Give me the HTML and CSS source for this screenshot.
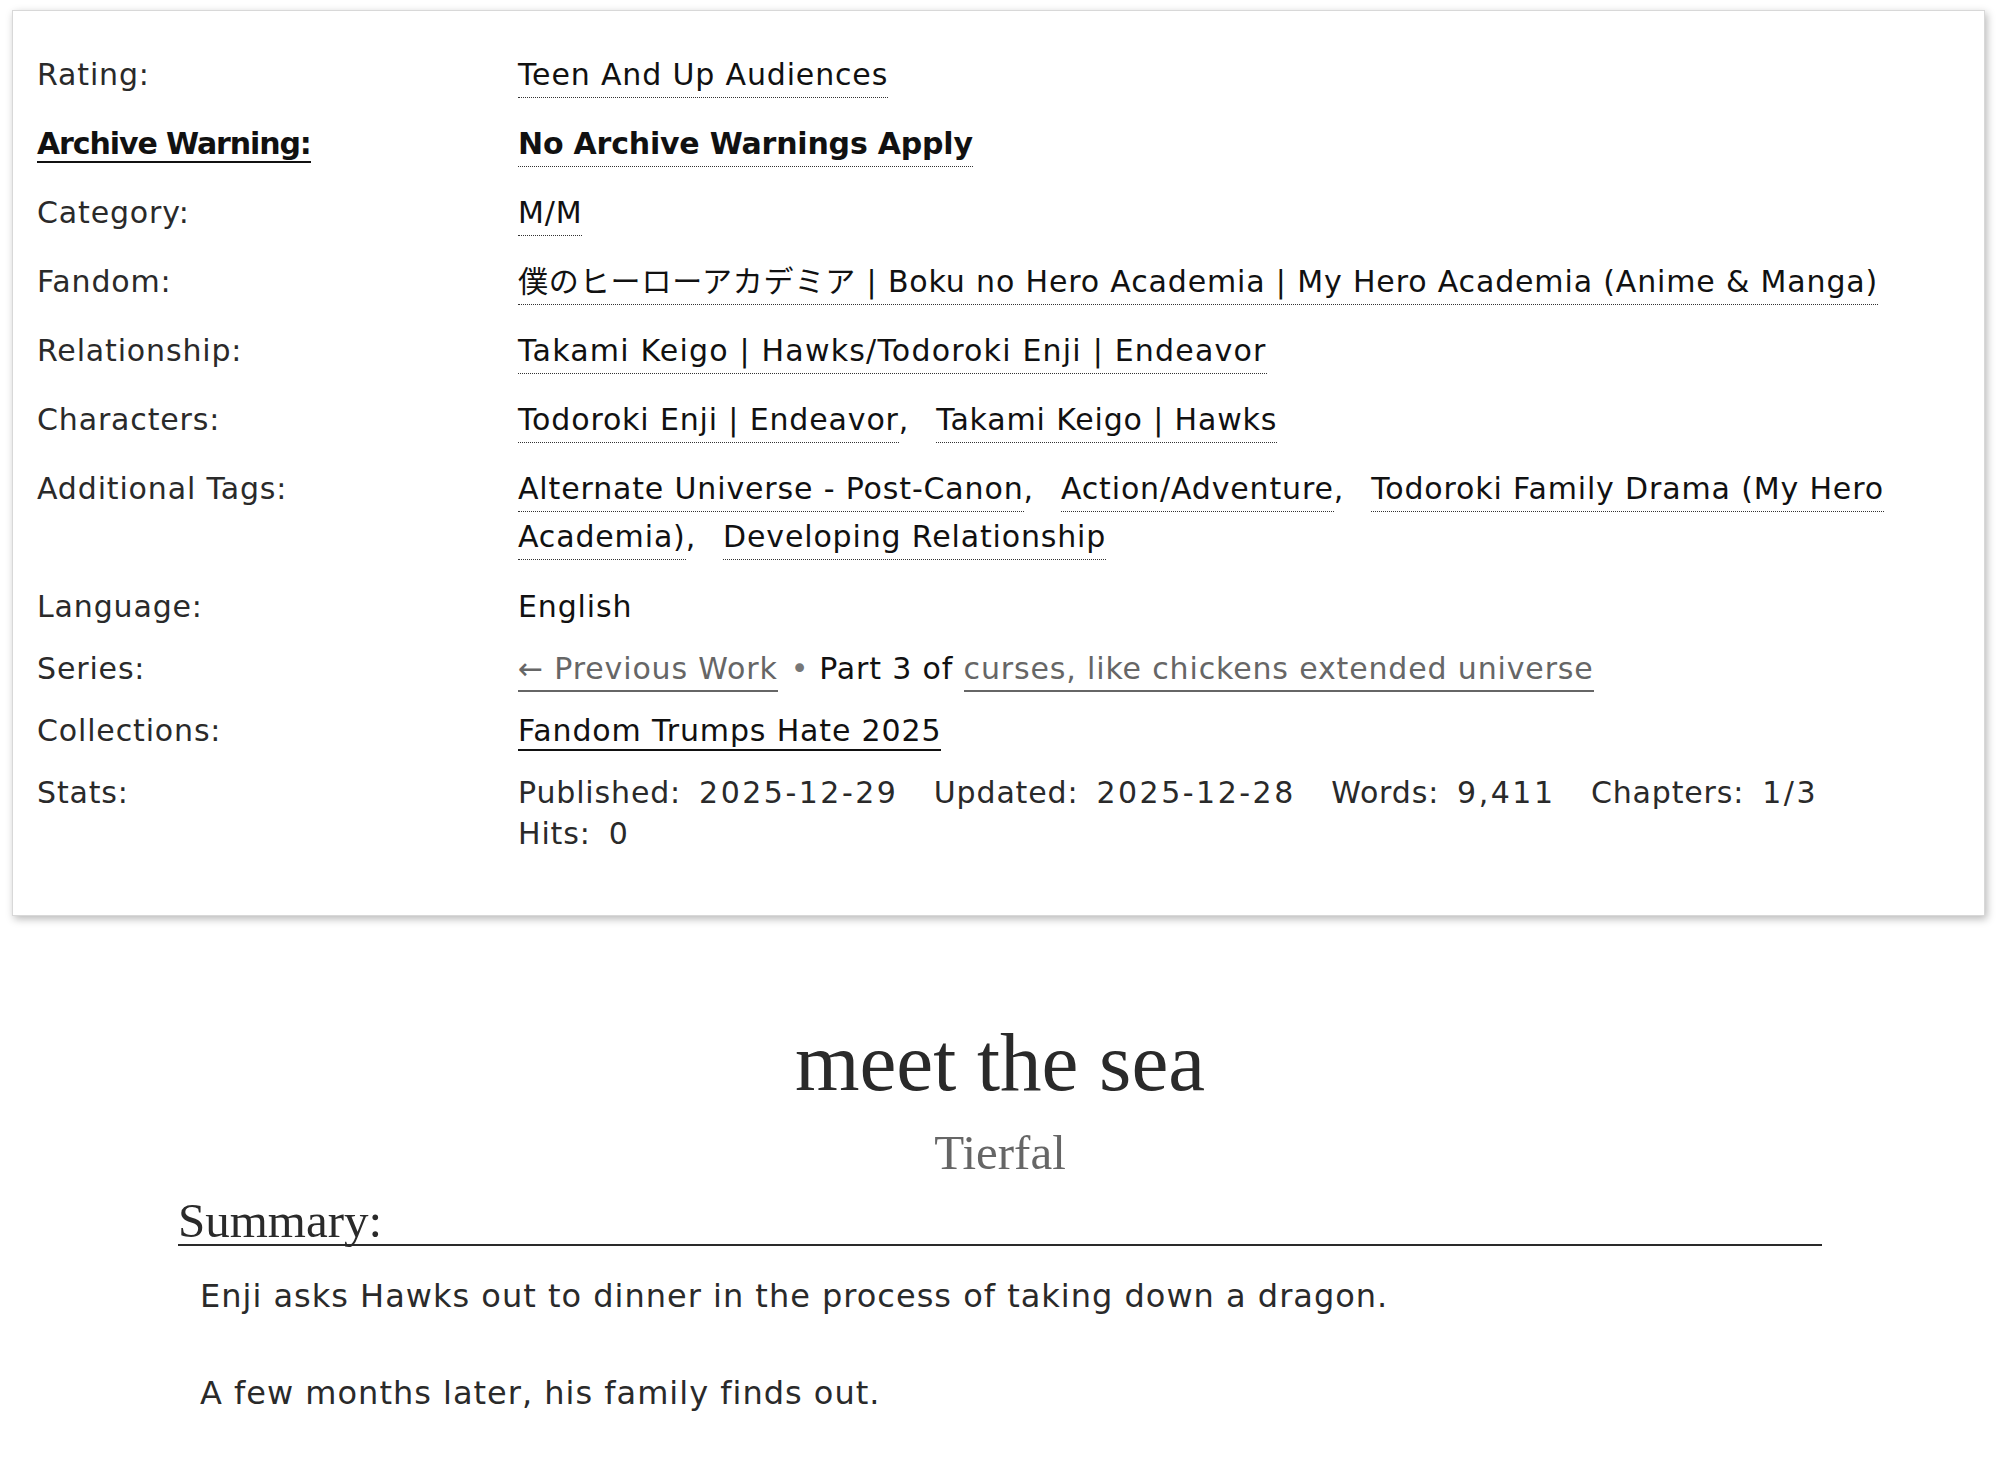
FILE: index.html
```html
<!DOCTYPE html>
<html lang="en">
<head>
<meta charset="utf-8">
<title>meet the sea - Tierfal</title>
<link rel="stylesheet" href="styles.css">
</head>
<body>
<div class="meta-box">
  <dl class="meta">
    <dt class="tall">Rating:</dt>
    <dd class="tall"><ul class="tags"><li><a class="tag">Teen And Up Audiences</a></li></ul></dd>

    <dt class="tall"><a class="help">Archive Warning:</a></dt>
    <dd class="tall"><ul class="tags"><li><a class="tag bold">No Archive Warnings Apply</a></li></ul></dd>

    <dt class="tall">Category:</dt>
    <dd class="tall"><ul class="tags"><li><a class="tag">M/M</a></li></ul></dd>

    <dt class="tall">Fandom:</dt>
    <dd class="tall"><ul class="tags"><li><a class="tag">僕のヒーローアカデミア | Boku no Hero Academia | My Hero Academia (Anime &amp; Manga)</a></li></ul></dd>

    <dt class="tall">Relationship:</dt>
    <dd class="tall"><ul class="tags"><li><a class="tag wide">Takami Keigo | Hawks/Todoroki Enji | Endeavor</a></li></ul></dd>

    <dt class="tall">Characters:</dt>
    <dd class="tall"><ul class="tags commas"><li><a class="tag">Todoroki Enji | Endeavor</a></li><li><a class="tag">Takami Keigo | Hawks</a></li></ul></dd>

    <dt class="tall">Additional Tags:</dt>
    <dd class="tall"><ul class="tags commas"><li><a class="tag">Alternate Universe - Post-Canon</a></li><li><a class="tag">Action/Adventure</a></li><li><a class="tag">Todoroki Family Drama (My Hero Academia)</a></li><li><a class="tag">Developing Relationship</a></li></ul></dd>

    <dt class="short lang">Language:</dt>
    <dd class="short lang">English</dd>

    <dt class="short">Series:</dt>
    <dd class="short series"><a class="series-link">← Previous Work</a><span class="dot">•</span>Part 3 of <a class="series-link">curses, like chickens extended universe</a></dd>

    <dt class="short">Collections:</dt>
    <dd class="short"><a class="coll-link">Fandom Trumps Hate 2025</a></dd>

    <dt class="short">Stats:</dt>
    <dd class="short stats">
      <span class="stat"><span class="k">Published:</span><span class="v">2025-12-29</span></span>
      <span class="stat"><span class="k">Updated:</span><span class="v">2025-12-28</span></span>
      <span class="stat"><span class="k">Words:</span><span class="v">9,411</span></span>
      <span class="stat"><span class="k">Chapters:</span><span class="v">1/3</span></span>
      <span class="stat"><span class="k">Hits:</span><span class="v">0</span></span>
    </dd>
  </dl>
</div>

<div class="preface">
  <h2 class="title">meet the sea</h2>
  <h3 class="byline">Tierfal</h3>
  <div class="summary">
    <h3 class="heading">Summary:</h3>
    <blockquote class="userstuff">
      <p>Enji asks Hawks out to dinner in the process of taking down a dragon.</p>
      <p>A few months later, his family finds out.</p>
    </blockquote>
  </div>
</div>
<div class="fade"></div>
</body>
</html>
```
FILE: styles.css
```css
html, body {
  margin: 0;
  padding: 0;
  background: #fff;
}
body {
  font-family: "DejaVu Sans", "Noto Sans CJK JP", sans-serif;
  font-size: 30px;
  color: #2a2a2a;
  width: 2000px;
  height: 1462px;
  overflow: hidden;
  display: flex;
  flex-direction: column;
}

.meta-box {
  margin: 10px 15px 0 12px;
  border: 1px solid #d8d8d8;
  box-shadow: 2px 3px 8px rgba(0, 0, 0, 0.28);
  background: #fff;
  padding: 40px 25px 61px 24px;
}

.meta {
  display: grid;
  grid-template-columns: 481px 1fr;
  row-gap: 21px;
  margin: 0;
  letter-spacing: 0.85px;
}
.meta dt, .meta dd {
  margin: 0;
}
.meta .tall { line-height: 48px; }
.meta .short { line-height: 41px; }
.meta .lang { margin-top: 4px; }
.meta dd { max-width: 1420px; color: #111; }

.tags {
  list-style: none;
  margin: 0;
  padding: 0;
  display: inline;
}
.tags li { display: inline; }
.commas li { margin-right: 27px; }
.commas li:last-child { margin-right: 0; }
.commas li::after { content: ","; }
.commas li:last-child::after { content: ""; }

.tag {
  color: #111;
  border-bottom: 1px dotted #333;
  padding-bottom: 5px;
}
.wide { letter-spacing: 1.2px; }
.bold {
  font-weight: bold;
  letter-spacing: -0.2px;
}

.help {
  color: #111;
  font-weight: bold;
  letter-spacing: -1.1px;
  border-bottom: 2px solid #111;
}

.series { color: #111; }
.series-link {
  color: #666;
  border-bottom: 2px solid #666;
  padding-bottom: 4px;
}
.dot {
  color: #777;
  margin: 0 10px 0 13px;
  font-size: 30px;
}
.coll-link {
  color: #111;
  border-bottom: 2px solid #111;
  padding-bottom: 1px;
}

.meta .stats { color: #2a2a2a; max-width: 1360px; }
.stat { margin-right: 25px; white-space: nowrap; }
.stat .v { margin-left: 18px; letter-spacing: 2.5px; }

.preface {
  width: 1644px;
  margin: 98px auto 0;
}
.title {
  font-family: "Liberation Serif", serif;
  font-weight: normal;
  font-size: 83px;
  line-height: 96px;
  text-align: center;
  margin: 0;
  color: #2a2a2a;
}
.byline {
  font-family: "Liberation Serif", serif;
  font-weight: normal;
  font-size: 49px;
  line-height: 56px;
  text-align: center;
  margin: 15px 0 0;
  color: #666;
}
.summary { margin-top: 17px; }
.heading {
  font-family: "Liberation Serif", serif;
  font-weight: normal;
  font-size: 49px;
  line-height: 46px;
  margin: 0;
  color: #2a2a2a;
  border-bottom: 2px solid #2a2a2a;
}
.userstuff {
  margin: 30px 0 0 22px;
  padding: 0;
  font-size: 32px;
  letter-spacing: 1px;
  line-height: 41px;
}
.userstuff p { margin: 0 0 56px; }

.fade {
  margin-top: auto;
  height: 42px;
  background: linear-gradient(#fdfdfd, #f3f3f3 40%, #f0f0f0);
}
```
